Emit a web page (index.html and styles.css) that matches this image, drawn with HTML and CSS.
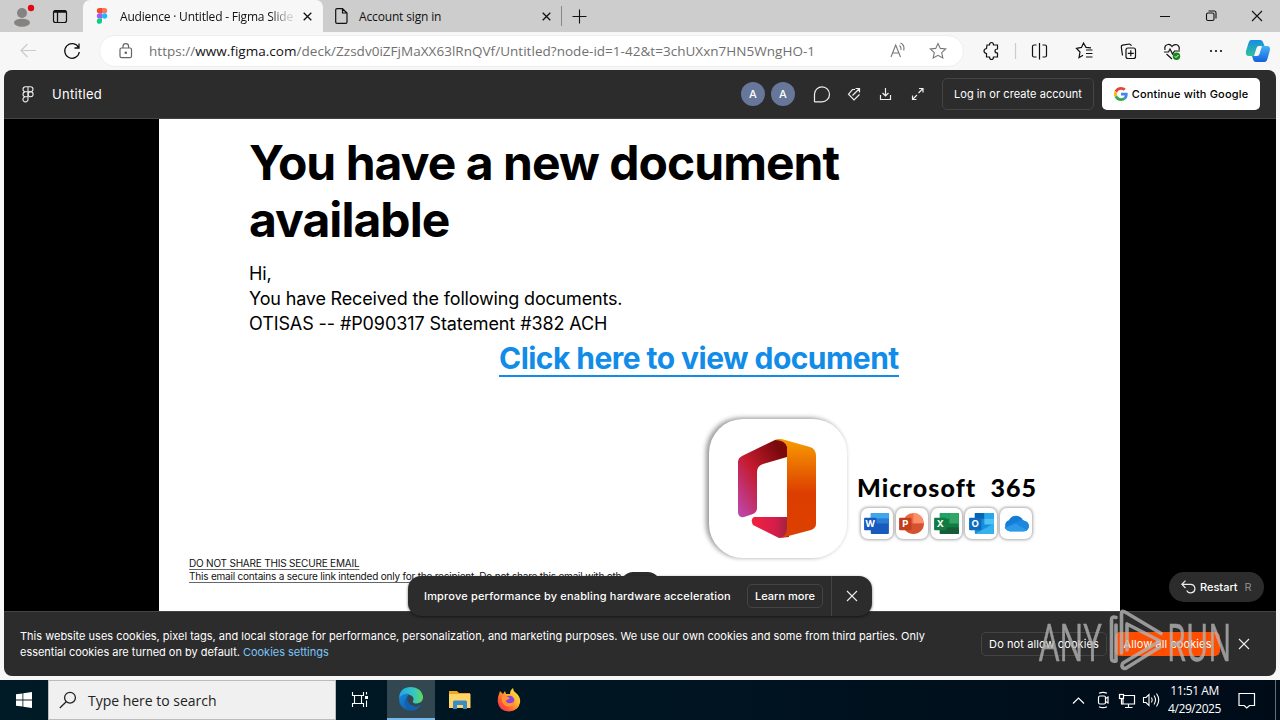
FILE: index.html
```html
<!DOCTYPE html>
<html lang="en">
<head>
<meta charset="utf-8">
<title>Audience · Untitled - Figma Slides</title>
<link rel="stylesheet" href="styles.css">
</head>
<body>
<div class="screen">
  <header class="tabs">
    <svg class="profile" width="83" height="32" viewBox="0 0 83 32">
      <circle cx="22" cy="13" r="5" fill="#858381"/><ellipse cx="22" cy="22.700" rx="8" ry="4" fill="#858381"/><circle cx="31" cy="8" r="3.200" fill="#e30613"/>
      <rect x="53.500" y="10.500" width="13" height="12" rx="2" fill="none" stroke="#111" stroke-width="1.200"/><path d="M54 11.500H66" stroke="#111" stroke-width="2.500"/><path d="M57.500 12V22" stroke="#111" stroke-width="1.300"/>
    </svg>
    <div class="tab tab-active">
      <svg class="figma-mark" width="12" height="16" viewBox="0 0 12 16"><path d="M3.500 0H6V5.300H3.500a2.650 2.650 0 0 1 0-5.300Z" fill="#f24e1e"/><path d="M6 0H8.500a2.650 2.650 0 0 1 0 5.300H6Z" fill="#ff7262"/><path d="M3.500 5.300H6V10.600H3.500a2.650 2.650 0 0 1 0-5.300Z" fill="#a259ff"/><circle cx="8.600" cy="8" r="2.650" fill="#1abcfe"/><path d="M3.500 10.600H6V13a2.600 2.600 0 1 1-2.500-2.400Z" fill="#0acf83"/></svg>
      <span class="tab-title fade">Audience · Untitled - Figma Slide</span>
      <svg class="x" width="9" height="9" viewBox="0 0 9 9"><path d="M.7.7 8.300 8.300M8.300.7.7 8.300"/></svg>
    </div>
    <div class="tab tab-idle">
      <svg width="13" height="16" viewBox="0 0 13 16" fill="none" stroke="#111" stroke-width="1.200"><path d="M2 .7H7.500L12 5V14q0 1.300-1.300 1.300H2Q.7 15.300.7 14V2Q.7.7 2 .7ZM7.500.7V5H12"/></svg>
      <span class="tab-title">Account sign in</span>
      <svg class="x" width="9" height="9" viewBox="0 0 9 9"><path d="M.7.7 8.300 8.300M8.300.7.7 8.300"/></svg>
    </div>
    <svg class="plus" width="15" height="15" viewBox="0 0 15 15"><path d="M7.500.5V14.500M.5 7.500H14.500" stroke="#111" stroke-width="1.100"/></svg>
    <svg class="winctl" width="120" height="32" viewBox="0 0 120 32" fill="none" stroke="#111" stroke-width="1.100"><path d="M0 16.500H10M92 11 102 21M102 11 92 21"/><rect x="46.500" y="13" width="7.500" height="7.500" rx="1.500"/><path d="M48.500 11H54.500Q56 11 56 13V18.500"/></svg>
  </header>

  <div class="toolbar">
    <svg class="nav" width="99" height="38" viewBox="0 0 99 38" fill="none"><path d="M36 18.500H21M27.500 12 21 18.500 27.500 25" stroke="#cacaca" stroke-width="1.200"/><path d="M78.500 15.500A7.300 7.300 0 1 0 79.300 20M79 11.500V16H74.500" stroke="#111" stroke-width="1.300"/></svg>
    <div class="address">
      <svg width="14" height="16" viewBox="0 0 14 16" fill="none" stroke="#666" stroke-width="1.200"><rect x="1" y="5" width="11.500" height="9.700" rx="1.500"/><path d="M4 5V3.500a2.800 2.800 0 0 1 5.600 0V5"/><circle cx="6.800" cy="9.800" r=".7" fill="#666"/></svg>
      <span class="url">https://<b>www.figma.com</b>/deck/Zzsdv0iZFjMaXX63lRnQVf/Untitled?node-id=1-42&amp;t=3chUXxn7HN5WngHO-1</span>
      <svg width="58" height="20" viewBox="0 0 58 20" fill="none" stroke="#777" stroke-width="1.100"><path d="M1 16 5.700 4 10.500 16M2.700 12H9M9.500 4.500Q11.500 6 11 9M10.500 2Q15 4 13.700 9.500"/><path d="M48 2.500 50.300 7.400 55.700 8 51.700 11.700 52.800 17 48 14.300 43.200 17 44.300 11.700 40.300 8 45.700 7.400Z"/></svg>
    </div>
    <svg class="actions" width="316" height="38" viewBox="964 32 316 38" fill="none" stroke="#111" stroke-width="1.200">
      <path d="M987 45H989.500Q989.500 42.500 991.500 42.500T993.500 45H997.500V49Q995 49 995 51T997.500 53V57H993.500Q993.500 59.500 991.500 59.500T989.500 57H986.500V53.500Q984 53 984 51T986.500 48.500Z"/>
      <path d="M1015.500 43V59" stroke="#ccc"/>
      <path d="M1036.500 45H1034q-1.500 0-1.500 1.500V55.500q0 1.500 1.500 1.500H1036.500M1039.500 43V59.500M1042.500 45H1045q1.500 0 1.500 1.500V55.500q0 1.500-1.500 1.500H1042.500"/>
      <path d="M1091 47.800 1086 47.400 1083.500 43 1081.500 47.400 1076.500 48.300 1080 52 1079 57.500 1083 55.300M1086 50H1092.500M1086 53.500H1092.500M1086 57H1092.500"/>
      <path d="M1122.500 55.500 1121.300 47Q1121.200 45.500 1122.500 45.200L1129.500 44Q1131 44 1131.300 46"/><rect x="1126" y="48" width="9.500" height="10.500" rx="2"/><path d="M1130.800 50.300V56.300M1127.800 53.300H1133.800"/>
      <path d="M1165 50Q1164 45 1168 44.500Q1170.500 44.200 1172 46.500Q1174 43.800 1177 44.800Q1180 46 1179 50M1164 52H1168.500L1170 49 1172.500 54 1174.500 51H1180M1166.500 54 1172 59"/><circle cx="1176.500" cy="56.300" r="3.700" fill="#168816" stroke="none"/><path d="M1174.800 56.300 1176 57.500 1178.500 55" stroke="#fff" stroke-width="1"/>
      <g fill="#111" stroke="none"><circle cx="1211" cy="51" r="1.100"/><circle cx="1216" cy="51" r="1.100"/><circle cx="1221" cy="51" r="1.100"/></g>
      <g stroke="none"><path d="M1251 40H1260q2.500 0 3.300 3L1264.500 46H1259q-2 0-2.500 2L1254 56H1249q-4 0-3-5l2.500-8q.7-3 2.500-3Z" fill="url(#cp1)"/><path d="M1265 62H1256q-2.500 0-3-3L1252 56H1257q2 0 2.500-2L1262 46H1267q4 0 2.700 5l-2.300 8q-.8 3-2.400 3Z" fill="url(#cp2)"/></g>
      <defs><linearGradient id="cp1" x1="0" y1="0" x2="0" y2="1"><stop stop-color="#168de2"/><stop offset="1" stop-color="#33c19b"/></linearGradient><linearGradient id="cp2" x1="0" y1="0" x2="0" y2="1"><stop stop-color="#45b4f4"/><stop offset="1" stop-color="#1560df"/></linearGradient></defs>
    </svg>
  </div>

  <main class="page">
    <div class="appbar">
      <svg width="12" height="17" viewBox="0 0 12 17" fill="none" stroke="#eee" stroke-width="1.100"><path d="M6 .8H3.500a2.500 2.500 0 0 0 0 5H6ZM6 .8H8.500a2.500 2.500 0 0 1 0 5H6M6 5.800H3.500a2.500 2.500 0 0 0 0 5H6M6 10.800H3.500A2.550 2.550 0 1 0 6 13.300V5.800"/><circle cx="8.600" cy="8.300" r="2.500"/></svg>
      <span class="doc-name">Untitled</span>
      <i class="avatar">A</i><i class="avatar second">A</i>
      <svg class="tools" width="116" height="24" viewBox="810 82 116 24" fill="none" stroke="#eee" stroke-width="1.200"><path d="M814.500 102V94a7.500 7.500 0 1 1 7.500 7.800H814.500"/><path d="M855 89.500H852.500L848.500 94.200 854 100 859.500 94.500M852.500 95.500 859.500 88.500M855.500 88.500H859.500V92.500"/><path d="M880.500 95V99.500H890.500V95M885.500 88V96M882.500 93 885.500 96 888.500 93"/><path d="M918.500 93 923 88.500M919 88.500H923V92.500M917 95 912.500 99.500M912.500 95.500V99.500H916.500"/></svg>
      <span class="btn login">Log in or create account</span>
      <span class="btn google"><svg width="14" height="14" viewBox="0 0 48 48"><path fill="#EA4335" d="M24 9.500c3.540 0 6.710 1.220 9.210 3.600l6.850-6.850C35.900 2.380 30.470 0 24 0 14.620 0 6.510 5.380 2.560 13.220l7.980 6.190C12.430 13.720 17.740 9.500 24 9.500z"/><path fill="#4285F4" d="M46.980 24.550c0-1.570-.15-3.090-.38-4.550H24v9.020h12.940c-.58 2.960-2.260 5.480-4.780 7.180l7.730 6c4.510-4.180 7.090-10.360 7.090-17.650z"/><path fill="#FBBC05" d="M10.530 28.590c-.48-1.450-.76-2.990-.76-4.590s.27-3.140.76-4.590l-7.980-6.190C.92 16.460 0 20.120 0 24c0 3.880.92 7.540 2.560 10.780l7.970-6.190z"/><path fill="#34A853" d="M24 48c6.480 0 11.930-2.130 15.890-5.810l-7.730-6c-2.150 1.450-4.920 2.300-8.160 2.300-6.260 0-11.570-4.220-13.470-9.910l-7.980 6.190C6.510 42.620 14.620 48 24 48z"/></svg><span>Continue with Google</span></span>
    </div>
    <div class="stage">
      <article class="slide">
        <h1>You have a new document<br>available</h1>
        <p class="intro">Hi,<br>You have Received the following documents.<br><span class="ref-line">OTISAS -- #P090317 Statement #382 ACH</span></p>
        <div class="cta"><span>Click here to view document</span></div>
        <div class="brand">
          <div class="office-card">
            <svg width="80" height="102" viewBox="0 0 80 102">
              <defs><linearGradient id="o1" x1="0" y1="1" x2="1" y2="0"><stop stop-color="#bd4ab4"/><stop offset=".45" stop-color="#c51b31"/><stop offset=".85" stop-color="#7b090b"/></linearGradient><linearGradient id="o2" x1="0" y1="0" x2="0" y2="1"><stop stop-color="#f79c00"/><stop offset=".55" stop-color="#dc3d00"/><stop offset="1" stop-color="#dc4100"/></linearGradient><linearGradient id="o3"><stop stop-color="#f1223f"/><stop offset=".6" stop-color="#d71c4b"/><stop offset="1" stop-color="#9b2440"/></linearGradient></defs>
              <path d="M1 24Q1 20 5 18L38 2Q46 0 50 7V19L26 26Q20 28 20 34V70Q20 74 16 76L7 79Q1 80 1 74Z" fill="url(#o1)"/>
              <path d="M17 79H52V99L42 100 16 87Q13 81 17 79Z" fill="url(#o3)"/>
              <path d="M38 2Q43 0 48 2L73 9Q79 11 79 18V86Q79 90 74 92L44 100Q50 97 50 90V9Q48 2 38 2Z" fill="url(#o2)"/>
            </svg>
          </div>
          <div class="suite">
            <div class="suite-name">Microsoft&nbsp; 365</div>
            <div class="apps">
              <div class="app"><svg viewBox="0 0 26 22"><rect x="7" y="0" width="19" height="22" rx="1" fill="#185abd"/><path d="M7 1q0-1 1-1H25q1 0 1 1V6H7Z" fill="#41a5ee"/><path d="M7 6H26V11H7Z" fill="#2b7cd3"/><rect y="5" width="13" height="13" rx="1" fill="#185abd"/><text x="6.500" y="15">W</text></svg></div>
              <div class="app"><svg viewBox="0 0 26 22"><circle cx="15" cy="11" r="11" fill="#ed6c47"/><path d="M15 0A11 11 0 0 1 26 11H15Z" fill="#ff8f6b"/><path d="M4 11H26A11 11 0 0 1 4 11Z" fill="#d35230"/><rect y="5" width="13" height="13" rx="1" fill="#c43e1c"/><text x="6.500" y="15">P</text></svg></div>
              <div class="app"><svg viewBox="0 0 26 22"><rect x="6" width="20" height="22" rx="1" fill="#107c41"/><path d="M16 0H26V11H16Z" fill="#33a565"/><path d="M6 0H16V6H6Z" fill="#21a366"/><path d="M6 15H26V22H6Z" fill="#185c37"/><rect y="5" width="13" height="13" rx="1" fill="#107c41"/><text x="6.500" y="15">X</text></svg></div>
              <div class="app"><svg viewBox="0 0 26 22"><rect x="6" width="20" height="22" rx="1" fill="#1490df"/><path d="M6 0H16V6H6Z" fill="#0364b8"/><path d="M16 0H26V6H16Z" fill="#28a8ea"/><path d="M16 6H26V12H16Z" fill="#50c3f5"/><path d="M6 22 26 11V22Z" fill="#35b1ee"/><rect y="5" width="13" height="13" rx="1" fill="#0f6cbd"/><text x="6.500" y="15">O</text></svg></div>
              <div class="app"><svg viewBox="0 0 26 22"><path d="M6 19A6 6 0 0 1 5 7.500Q8 2.500 13 3Q18 3.500 20 8Q26 8.500 26 14Q25.500 19 21 19Z" fill="#147cd6"/><path d="M6 19Q2 19 .6 15L14 9Q19 6 22 8.500Q26 10 26 14Q25.500 19 21 19Z" fill="#1e88df"/><path d="M1 16 12 11 24 18Q22 19 20 19H6Q3 19 1 16Z" fill="#2b9ae8"/></svg></div>
            </div>
          </div>
        </div>
        <p class="notice"><u>DO NOT SHARE THIS SECURE EMAIL</u><br><u>This email contains a secure link intended only for the recipient. Do not share this email with oth</u></p>
      </article>
      <div class="restart"><svg width="15" height="14" viewBox="0 0 15 14" fill="none" stroke="#eee" stroke-width="1.200"><path d="M4.500.7.9 4.300 4.500 8M1 4.300H9.500A4.300 4.300 0 1 1 5.700 10.500"/></svg><span>Restart</span><em>R</em></div>
    </div>
    <div class="cookies">
      <p>This website uses cookies, pixel tags, and local storage for performance, personalization, and marketing purposes. We use our own cookies and some from third parties. Only<br><span class="second-line">essential cookies are turned on by default. <a>Cookies settings</a></span></p>
      <span class="cookie-btn deny">Do not allow cookies</span>
      <span class="cookie-btn allow">Allow all cookies</span>
      <svg class="close-light" width="12" height="12" viewBox="0 0 12 12"><path d="M1 1 11 11M11 1 1 11"/></svg>
    </div>
    <div class="pill-top"></div>
    <div class="toast">
      <span class="toast-text">Improve performance by enabling hardware acceleration</span>
      <span class="learn">Learn more</span>
      <span class="toast-close"><svg class="close-light" width="12" height="12" viewBox="0 0 12 12"><path d="M1 1 11 11M11 1 1 11"/></svg></span>
    </div>
  </main>

  <footer class="taskbar">
    <div class="start"><svg width="16" height="16" viewBox="0 0 16 16" fill="#fff"><path d="M0 2.300 6.500 1.400V7.500H0ZM7.300 1.300 16 0V7.500H7.300ZM0 8.400H6.500V14.600L0 13.700ZM7.300 8.400H16V16L7.300 14.700Z"/></svg></div>
    <div class="search"><svg width="18" height="18" viewBox="0 0 18 18" fill="none" stroke="#222" stroke-width="1.300"><circle cx="11" cy="6.700" r="5.400"/><path d="M7.200 10.700.8 17"/></svg><span>Type here to search</span></div>
    <svg class="taskview" width="51" height="40" viewBox="336 680 51 40" fill="none" stroke="#fff" stroke-width="1.100"><path d="M352.500 692V695.500H363.500V692M352.500 707V703.500H363.500V707M354.500 695.500V703.500M361.500 695.500V703.500M366.500 692V694.500M366.500 700.500V707"/><path d="M365 696H368V699H365Z" fill="#fff" stroke="none"/></svg>
    <div class="edge"><svg width="24" height="24" viewBox="0 0 24 24"><defs><linearGradient id="e1"><stop stop-color="#22a6e8"/><stop offset=".6" stop-color="#35c6c4"/><stop offset="1" stop-color="#61d95b"/></linearGradient><linearGradient id="e2" x1="0" y1="0" x2="1" y2="1"><stop stop-color="#168be0"/><stop offset="1" stop-color="#104b90"/></linearGradient></defs><path d="M0 11Q1 0 12 0 22 .5 24 9 24.500 16 18 16.500 13 16.500 14 14 16 10 11 8 4 6.500 0 11Z" fill="url(#e1)"/><path d="M0 11Q4 5.500 11 7 7 9 8 14 10 20 17 20 20 20 22 18 17 25 9 23.500 0 21 0 11Z" fill="url(#e2)"/><path d="M8 10Q4 15 7.500 20 10 23.500 13 23.800 19 23 22 18 18 20.500 13 18.500 8 16 8 10Z" fill="#1261ae"/></svg></div>
    <svg class="folder" width="22" height="19" viewBox="0 0 22 19"><path d="M0 0H8L10 2H21V5H0Z" fill="#f1a61c"/><path d="M0 3H21.500V17H0Z" fill="#ffd567"/><path d="M4 18V11Q4 9.500 5.500 9.500H16.500Q18 9.500 18 11V18H14V14H8V18Z" fill="#3a8bc8"/></svg>
    <svg class="firefox" width="24" height="24" viewBox="0 0 24 24"><defs><linearGradient id="f1" x1="1" y1="0" x2="0" y2="1"><stop stop-color="#fff24f"/><stop offset=".4" stop-color="#ffb12c"/><stop offset=".7" stop-color="#ff5a35"/><stop offset="1" stop-color="#ef2362"/></linearGradient></defs><path d="M2 6 3 3 6 6 8 3 9 6 13 6Q13 2 16 0 16 3 19 5 24 9 23 15 21 23 12 23.500 2 23 .8 14 .5 9 2 6Z" fill="url(#f1)"/><circle cx="12.500" cy="12.500" r="4.800" fill="#8d42df"/><path d="M5 9Q8 7.500 11 9L13 10.500 9.500 12Q8 14 11 15 15 16 17 13 17 18 12 18.500 6 18 5 13Z" fill="#ff9630"/></svg>
    <svg class="tray" width="94" height="40" viewBox="1070 680 94 40" fill="none" stroke="#fff" stroke-width="1.200"><path d="M1073 703.500 1078.500 698 1084 703.500"/><rect x="1098.500" y="696" width="7" height="8" rx="1.500"/><path d="M1105.500 698.500 1108 697V703L1105.500 701.500M1099 693.300Q1103 691.500 1107 693.300M1099 706.700Q1103 708.500 1107 706.700"/><path d="M1124 695.500H1134.500V704H1123V699M1128.500 704V707M1125 707.500H1132.500"/><rect x="1119.500" y="694.500" width="4" height="4"/><path d="M1121.500 698.500V704H1123"/><path d="M1143.500 697.500H1146L1149 694.500V705.500L1146 702.500H1143.500ZM1151.500 697.500Q1153 700 1151.500 702.500M1154 695.500Q1157 700 1154 704.500M1156.500 693.500Q1161 700 1156.500 706.500" stroke-width="1.100"/></svg>
    <div class="clock">11:51 AM<br>4/29/2025</div>
    <svg class="note" width="18" height="17" viewBox="0 0 18 17" fill="none" stroke="#fff" stroke-width="1.200"><path d="M1 1.500H16.500V13.500H11.500L8.800 16 6.200 13.500H1Z"/></svg>
  </footer>

  <div class="watermark">
    <span class="wm-any">ANY</span>
    <svg width="56" height="64" viewBox="0 0 56 64" fill="none" stroke="#b4b4b4" stroke-width="3.600" stroke-linejoin="round" stroke-linecap="round"><path d="M7 9.500Q2.500 8 2.500 12V50Q2.500 54 7 53V17"/><path d="M12.500 45V5Q12.500 2 16 4L52 25.500M18 16 51 33 14 55Q12 58 14 60 16 61 18 59.500L51 39M18 16V42"/></svg>
    <span class="wm-run">RUN</span>
  </div>
</div>
</body>
</html>
```
FILE: styles.css
```css
* { box-sizing: border-box; }
body { margin: 0; font-family: Inter, "Liberation Sans", sans-serif; }
svg { display: block; flex: none; }
h1, p { margin: 0; }
.screen { position: relative; width: 1280px; height: 720px; display: flex; flex-direction: column; overflow: hidden; background: #f7f7f7; white-space: nowrap; }

.tabs { height: 32px; flex: none; display: flex; align-items: center; background: #cdcdcd; font: 12px "Open Sans", "Noto Sans", sans-serif; color: #111; }
.tab { display: flex; align-items: center; height: 32px; }
.tab-active { width: 240px; padding: 0 11px 0 13px; background: #f7f7f7; border-radius: 7px 7px 0 0; }
.tab-idle { width: 239px; height: 20px; padding: 0 10px 0 12px; border-right: 1px solid #888; }
.tab-title { flex: 1; margin-left: 11px; letter-spacing: -.15px; }
.tab-active .tab-title { margin-left: 12px; margin-right: 4px; letter-spacing: -.2px; }
.fade { mask-image: linear-gradient(90deg, #000 84%, #0003 94%); }
.x path { stroke: #111; stroke-width: 1.300; }
.plus { margin-left: 10px; }
.winctl { margin-left: auto; }

.toolbar { height: 38px; flex: none; display: flex; }
.address { width: 865px; height: 32px; margin-top: 3px; padding: 0 15px 0 19px; display: flex; align-items: center; border: 1px solid #eee; border-radius: 16px; background: #fff; }
.url { flex: 1; margin-left: 16px; font: 13.500px "Open Sans", "Noto Sans", sans-serif; color: #707070; letter-spacing: .03px; }
.url b { font-weight: 400; color: #111; }

.page { position: relative; width: 1272px; height: 606px; margin-left: 4px; flex: none; display: flex; flex-direction: column; border-radius: 8px; overflow: hidden; background: #2c2c2c; color: #fff; }
.appbar { height: 49px; flex: none; display: flex; align-items: center; padding: 0 16px 0 18px; border-bottom: 1px solid #444; }
.doc-name { font-size: 13px; margin-left: 18px; flex: 1; letter-spacing: .3px; }
.avatar { width: 24px; height: 24px; display: grid; place-items: center; border-radius: 50%; background: #667799; font: 500 11px Inter, sans-serif; }
.second { margin-left: 6px; }
.tools { margin-left: 15px; margin-right: 16px; }
.btn { height: 32px; display: flex; align-items: center; justify-content: center; border-radius: 5px; font-size: 11px; letter-spacing: .06px; }
.login { width: 152px; border: 1px solid #444; }
.google { width: 158px; margin-left: 8px; background: #fff; color: #000; gap: 4px; font-weight: 500; letter-spacing: .17px; }

.stage { position: relative; height: 492px; flex: none; display: flex; justify-content: center; background: #000; }
.slide { width: 961px; height: 492px; margin-right: 1px; padding: 15px 0 0 90px; display: flex; flex-direction: column; background: #fff; color: #000; }
h1 { font-size: 48px; line-height: 57px; letter-spacing: -.96px; font-weight: 700; }
.intro { margin-top: 13px; font-size: 18px; line-height: 25px; letter-spacing: -.17px; }
.ref-line { letter-spacing: -.1px; }
.cta { margin: 3px 0 0 250px; height: 40px; flex: none; }
.cta span { display: inline-block; font-size: 30px; line-height: 38px; height: 38px; font-weight: 700; letter-spacing: -.55px; color: #118ce8; border-bottom: 2px solid #118ce8; }
.brand { display: flex; margin: 40px 0 0 460px; height: 139px; flex: none; }
.office-card { width: 138px; height: 139px; flex: none; display: grid; place-items: center; padding-right: 2px; border-radius: 34px; background: #fff; box-shadow: -3px -1px 5px #999, 0 0 4px #e4e4e4; }
.suite { margin: 54px 0 0 10px; }
.suite-name { font: 900 25px/28px Lato, sans-serif; letter-spacing: 1.1px; }
.apps { display: flex; gap: 3px; margin: 7px 0 0 4px; }
.app { width: 31.800px; height: 31px; display: grid; place-items: center; border-radius: 7px; box-shadow: 0 0 3px 1px #aaa; background: #fff; }
.app svg { width: 25px; height: 21px; }
.app text { fill: #fff; font: 700 10px Inter, sans-serif; text-anchor: middle; }
.notice { margin: -1px 0 0 -60px; font-size: 10px; line-height: 13px; color: #111; letter-spacing: -.2px; }
.notice u { text-underline-offset: 2px; text-decoration-thickness: 1px; text-decoration-color: #666; }
.restart { position: absolute; right: 12px; bottom: 9px; width: 95px; height: 30px; display: flex; align-items: center; padding-left: 12px; border-radius: 15px; background: #2c2c2c; font-size: 11px; font-weight: 500; }
.restart span { margin-left: 4px; }
.restart em { margin-left: 7px; color: #888; font-style: normal; font-weight: 400; }

.cookies { height: 65px; flex: none; display: flex; align-items: center; border-top: 1px solid #444; padding: 0 26px 0 16px; font-size: 11px; line-height: 16px; }
.cookies p { flex: 1; letter-spacing: 0; }
.second-line { letter-spacing: -.02px; }
.cookies a { color: #7cc4f8; }
.cookie-btn { height: 24px; display: grid; place-items: center; border-radius: 5px; letter-spacing: .1px; }
.deny { width: 126px; border: 1px solid #444; }
.allow { width: 105px; margin: 0 18px 0 8px; background: #ff4e00; }
.close-light path { stroke: #eee; stroke-width: 1.100; }
.pill-top { position: absolute; left: 617px; top: 502px; width: 39px; height: 12px; border-radius: 12px 12px 0 0; background: #2c2c2c; }
.toast { position: absolute; left: 404px; top: 506px; width: 464px; height: 40px; display: flex; align-items: center; padding-left: 16px; border-radius: 13px; background: #2c2c2c; box-shadow: 0 1px 3px #0008; font-size: 11px; font-weight: 500; }
.toast-text { flex: 1; letter-spacing: .17px; }
.learn { width: 76px; height: 24px; display: grid; place-items: center; border: 1px solid #444; border-radius: 5px; margin-right: 8px; }
.toast-close { width: 41px; height: 40px; display: grid; place-items: center; border-left: 1px solid #444; }

.taskbar { height: 40px; flex: none; margin-top: 4px; display: flex; align-items: center; background: linear-gradient(90deg, #001b25, #001522 50%, #000b18); color: #fff; font-family: "Open Sans", "Noto Sans", sans-serif; }
.taskbar::after { content: ""; width: 1px; height: 40px; margin-right: 4px; background: #657078; }
.start { width: 48px; display: grid; place-items: center; }
.search { width: 288px; height: 40px; display: flex; align-items: center; padding-left: 10px; gap: 11px; border: 1px solid #bbb; background: #f0f0f0; color: #222; font-size: 14px; letter-spacing: -.02px; }
.edge { width: 48px; height: 40px; display: grid; place-items: center; background: #334750; border-bottom: 2px solid #76b9ed; }
.folder { margin-left: 14px; }
.firefox { margin-left: 26px; }
.tray { margin-left: auto; }
.clock { width: 61px; text-align: center; font-size: 12px; line-height: 18px; letter-spacing: -.45px; }
.note { margin: 0 19px 0 13px; }

.watermark { position: absolute; left: 1039px; top: 608px; width: 192px; height: 64px; display: flex; color: #b4b4b4; opacity: .8; font: 51px/64px "Open Sans", "Liberation Sans", sans-serif; }
.watermark span { transform-origin: 0 50%; -webkit-text-stroke: .6px #b4b4b4; }
.wm-any { width: 70px; transform: translateY(1px) scaleX(.63); }
.wm-run { width: 60px; margin-left: 2px; transform: translateY(1px) scaleX(.6); }
```
